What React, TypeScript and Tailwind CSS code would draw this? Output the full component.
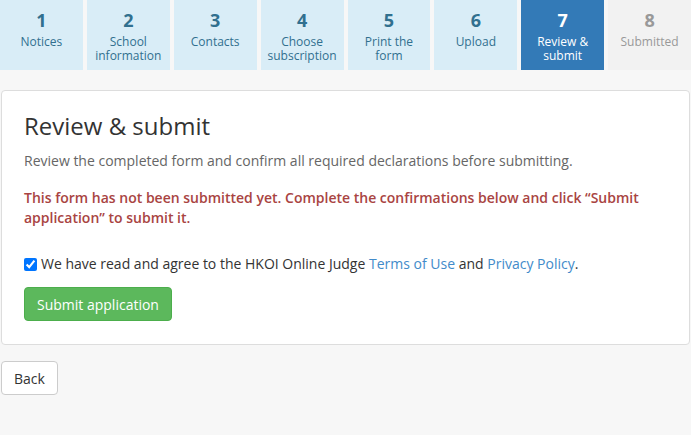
import React from "react";

const steps = [
  { n: 1, label: ["Notices"] },
  { n: 2, label: ["School", "information"] },
  { n: 3, label: ["Contacts"] },
  { n: 4, label: ["Choose", "subscription"] },
  { n: 5, label: ["Print the", "form"] },
  { n: 6, label: ["Upload"] },
  { n: 7, label: ["Review &", "submit"] },
  { n: 8, label: ["Submitted"] },
];

const current = 7;

function Step({ n, label }: { n: number; label: string[] }) {
  const cls =
    n === current
      ? "bg-[#337ab7] text-white"
      : n > current
      ? "bg-[#f2f2f2] text-[#999]"
      : "bg-[#d9edf7] text-[#31708f]";
  return (
    <div className={`h-[70px] flex flex-col items-center pt-[8px] ${cls}`}>
      <div className="text-[18px] font-bold leading-[24px]">{n}</div>
      <div className="text-[12px] leading-[14px] text-center mt-[3px]">
        {label.map((l) => (
          <div key={l}>{l}</div>
        ))}
      </div>
    </div>
  );
}

export default function App() {
  return (
    <div
      className="min-h-[435px] bg-[#f7f7f7] text-[#333]"
      style={{ fontFamily: '"Open Sans", "Noto Sans", sans-serif' }}
    >
      <div className="grid grid-cols-8 gap-[4px]">
        {steps.map((s) => (
          <Step key={s.n} n={s.n} label={s.label} />
        ))}
      </div>

      <div className="px-px pt-[20px]">
        <div className="bg-white border border-[#ddd] rounded-[4px] px-[22px] pt-[21px] pb-[23px]">
          <h1 className="text-[24px] leading-[28px] text-[#333] font-normal">Review &amp; submit</h1>
          <p className="text-[14px] leading-[20px] text-[#666] mt-[11px]">
            Review the completed form and confirm all required declarations before submitting.
          </p>
          <p className="text-[14px] leading-[20px] font-semibold text-[#a94442] mt-[17px]">
            This form has not been submitted yet. Complete the confirmations below and click “Submit
            application” to submit it.
          </p>
          <label className="flex items-center gap-[4px] text-[14px] leading-[20px] mt-[26px]">
            <input type="checkbox" defaultChecked className="w-[13px] h-[13px] m-0 accent-[#0075ff]" />
            <span>
              We have read and agree to the HKOI Online Judge{" "}
              <a className="text-[#428bca]">Terms of Use</a> and{" "}
              <a className="text-[#428bca]">Privacy Policy</a>.
            </span>
          </label>
          <button className="mt-[13px] h-[34px] px-[12px] rounded-[4px] bg-[#5cb85c] border border-[#4cae4c] text-white text-[14px]">
            Submit application
          </button>
        </div>
        <button className="mt-[16px] h-[34px] px-[12px] rounded-[4px] bg-white border border-[#ccc] text-[14px] text-[#333]">
          Back
        </button>
      </div>
    </div>
  );
}
